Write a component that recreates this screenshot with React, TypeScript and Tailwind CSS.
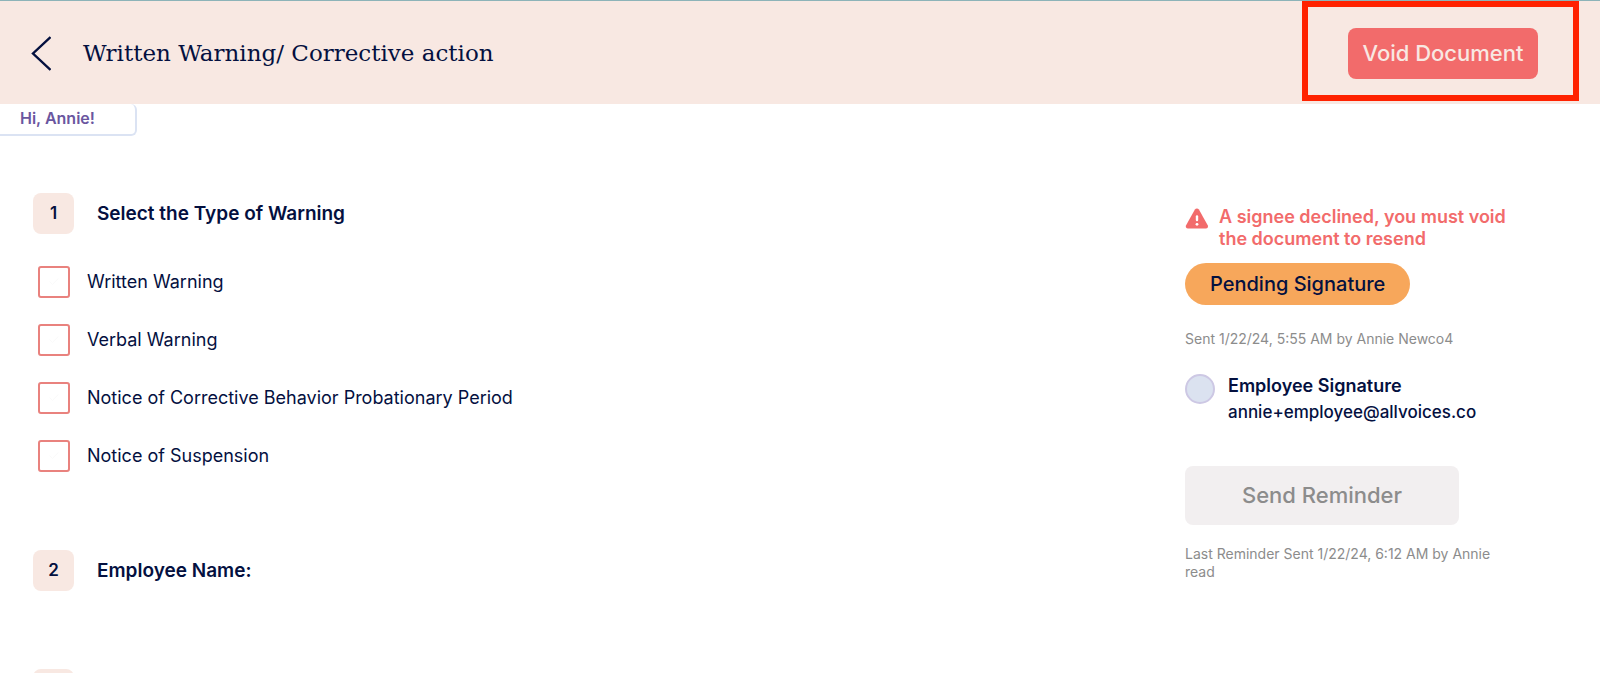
import { useState } from 'react'
import { Check } from 'lucide-react'

const warningTypes = [
  'Written Warning',
  'Verbal Warning',
  'Notice of Corrective Behavior Probationary Period',
  'Notice of Suspension',
]

const StepHeading = ({ step, title }: { step?: number; title?: string }) => (
  <div className="flex items-center gap-[23px]">
    <span className="flex h-[41px] w-[41px] shrink-0 items-center justify-center rounded-lg bg-[#f8e8e2] text-[17px] font-semibold">
      {step}
    </span>
    {title && <h2 className="text-[19px] leading-6 font-semibold">{title}</h2>}
  </div>
)

const WarningOption = ({ label }: { label: string }) => {
  const [checked, setChecked] = useState(false)

  return (
    <label className="flex h-8 items-center gap-[17px] text-lg">
      <span className="relative h-8 w-8 shrink-0">
        <input
          type="checkbox"
          checked={checked}
          onChange={(e) => setChecked(e.target.checked)}
          className="block h-8 w-8 appearance-none rounded-[3px] border-2 border-[#e9827e] bg-white checked:bg-[#e9827e]"
        />
        <Check className="pointer-events-none absolute top-2.5 left-2.5 h-3 w-3 text-[#fafafa]" />
      </span>
      {label}
    </label>
  )
}

const WarningIcon = () => (
  <svg viewBox="0 0 24 22" className="h-[22px] w-6 shrink-0" aria-hidden="true">
    <path
      d="M9.9 1.6c.9-1.5 3.1-1.5 4 0l8.8 15.6c.9 1.6-.1 3.3-1.9 3.3H3c-1.8 0-2.8-1.7-1.9-3.3z"
      fill="#f26b6b"
    />
    <path d="M12 8.5v3.5" stroke="#fff" strokeWidth="2.4" strokeLinecap="round" />
    <circle cx="12" cy="16.3" r="1.4" fill="#fff" />
  </svg>
)

const SignaturePanel = () => (
  <aside className="flex w-[415px] shrink-0 flex-col items-start pt-[102px] pr-[84px]">
    <div className="flex items-start gap-2.5 text-lg leading-[22px] font-semibold text-[#f26b6b]">
      <div className="pt-0.5">
        <WarningIcon />
      </div>
      <p>
        A signee declined, you must void
        <br />
        the document to resend
      </p>
    </div>
    <span className="mt-[13px] flex h-[42px] items-center rounded-full bg-[#f7a75b] px-[25px] text-xl font-medium">
      Pending Signature
    </span>
    <p className="mt-[25px] text-sm leading-[18px] text-[#8c8c8c]">
      Sent 1/22/24, 5:55 AM by Annie Newco4
    </p>
    <div className="mt-6 flex gap-[13px]">
      <span className="mt-0.5 h-[30px] w-[30px] shrink-0 rounded-full border-2 border-[#cdc8e4] bg-[#dbe2f0]" />
      <div>
        <h3 className="text-lg leading-[27px] font-semibold">Employee Signature</h3>
        <p className="text-[17px] leading-[27px] font-medium">annie+employee@allvoices.co</p>
      </div>
    </div>
    <button
      type="button"
      className="mt-10 h-[59px] w-[274px] rounded-lg bg-[#f2eff0] text-[22px] font-medium text-[#8c8c8c]"
    >
      Send Reminder
    </button>
    <p className="mt-5 text-sm leading-[18px] text-[#8c8c8c]">
      Last Reminder Sent 1/22/24, 6:12 AM by Annie read
    </p>
  </aside>
)

const App = () => {
  return (
    <div className="h-screen overflow-hidden bg-white font-['Inter',sans-serif] text-[#04103f]">
      <header className="flex items-start justify-between border-t border-[#8db3b8] bg-[#f8e8e2] pl-[31px]">
        <div className="flex h-[103px] items-center gap-8">
          <button type="button" aria-label="Back">
            <svg viewBox="0 0 20 36" className="h-9 w-5" fill="none" stroke="currentColor" strokeWidth="2.4">
              <path d="M19.5 2 2 18.5 19.5 35" />
            </svg>
          </button>
          <h1 className="font-['DejaVu_Serif',serif] text-[23px] leading-9">
            Written Warning/ Corrective action
          </h1>
        </div>
        <div className="mr-[21px] border-[6px] border-[#ff2200] pt-[21px] pr-[35px] pb-4 pl-10">
          <button
            type="button"
            className="block h-[51px] w-[190px] rounded-lg bg-[#f26b6b] text-[22px] font-medium text-[#f8e8e2]"
          >
            Void Document
          </button>
        </div>
      </header>

      <div className="flex justify-between">
        <main>
          <div className="flex h-8 w-[137px] items-center rounded-r-md border-r-2 border-b-2 border-[#dbe3f3] pb-0.5 pl-5 font-semibold text-[#6a569f]">
            Hi, Annie!
          </div>
          <div className="pt-[57px] pl-[33px]">
            <StepHeading step={1} title="Select the Type of Warning" />
            <div className="mt-8 flex flex-col gap-[26px] pl-[5px]">
              {warningTypes.map((label) => (
                <WarningOption key={label} label={label} />
              ))}
            </div>
            <div className="mt-[78px] flex flex-col gap-[78px]">
              <StepHeading step={2} title="Employee Name:" />
              <StepHeading />
            </div>
          </div>
        </main>
        <SignaturePanel />
      </div>
    </div>
  )
}

export default App
